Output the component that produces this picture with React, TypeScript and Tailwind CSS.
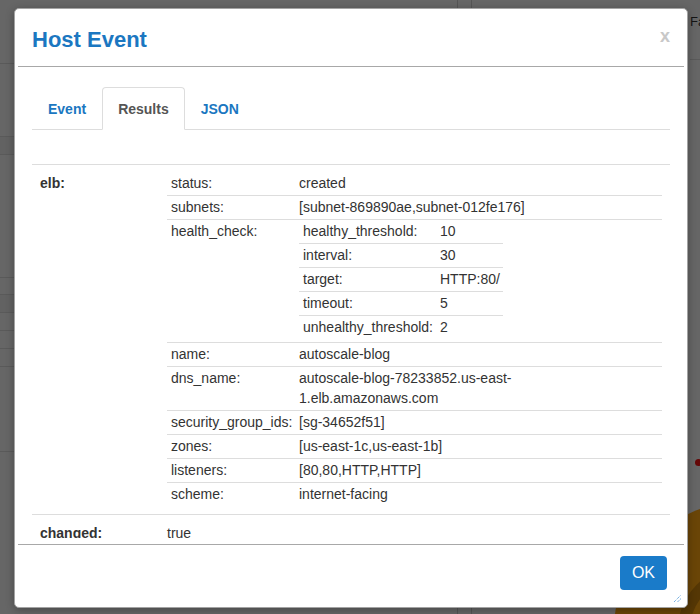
const nested: [string, string][] = [
  ['healthy_threshold:', '10'],
  ['interval:', '30'],
  ['target:', 'HTTP:80/'],
  ['timeout:', '5'],
  ['unhealthy_threshold:', '2'],
]

const elb: { key: string; value?: string[]; nested?: boolean }[] = [
  { key: 'status:', value: ['created'] },
  { key: 'subnets:', value: ['[subnet-869890ae,subnet-012fe176]'] },
  { key: 'health_check:', nested: true },
  { key: 'name:', value: ['autoscale-blog'] },
  { key: 'dns_name:', value: ['autoscale-blog-78233852.us-east-', '1.elb.amazonaws.com'] },
  { key: 'security_group_ids:', value: ['[sg-34652f51]'] },
  { key: 'zones:', value: ['[us-east-1c,us-east-1b]'] },
  { key: 'listeners:', value: ['[80,80,HTTP,HTTP]'] },
  { key: 'scheme:', value: ['internet-facing'] },
]

function Backdrop() {
  return (
    <div className="flex h-full">
      <div className="w-[14px] shrink-0">
        <div className="h-[64px] border-b border-[#5a5a5a]" />
        <div className="h-[73px] border-b border-[#5a5a5a]" />
        <div className="h-[18px] bg-[#626262] border-b border-[#5a5a5a]" />
        <div className="h-[123px] border-b border-[#5a5a5a]" />
        <div className="h-[17px] border-b border-[#5a5a5a]" />
        <div className="h-[18px] bg-[#626262] border-b border-[#5a5a5a]" />
        <div className="h-[18px] border-b border-[#5a5a5a]" />
        <div className="h-[18px] border-b border-[#5a5a5a]" />
        <div className="h-[18px] border-b border-[#5a5a5a]" />
        <div className="h-[85px] border-b border-[#5a5a5a]" />
      </div>
      <div className="flex-1">
        <div className="ml-[443px] h-full w-[15px] border-x border-[#555]" />
      </div>
      <div className="w-[12px] shrink-0 pl-[2px]">
        <div className="h-[60px] border-b border-[#5a5a5a] pt-[14px] text-[13px] leading-4 text-[#151515] whitespace-nowrap">
          Fa
        </div>
        <div className="ml-[5px] mt-[399px] h-[7px] w-[7px] rounded-full bg-[#650707]" />
      </div>
    </div>
  )
}

function Blob() {
  return (
    <svg className="absolute right-0 bottom-0" width="100" height="110" viewBox="600 504 100 110">
      <circle cx="742" cy="630" r="128" fill="#6a4507" />
      <circle cx="742" cy="630" r="58" fill="none" stroke="#553705" strokeWidth="12" />
    </svg>
  )
}

function ElbTable() {
  return (
    <table className="w-full border-collapse">
      <tbody>
        {elb.map((row, i) => (
          <tr key={row.key} className={i ? 'border-t border-[#ddd]' : ''}>
            <td className="w-[128px] whitespace-nowrap pl-1 pt-px pb-[2px] align-top leading-5">{row.key}</td>
            {row.nested ? (
              <td className="pl-1 pb-[3px] align-top">
                <table className="border-collapse">
                  <tbody>
                    {nested.map(([k, v], j) => (
                      <tr key={k} className={j ? 'border-t border-[#ddd]' : ''}>
                        <td className="whitespace-nowrap pl-1 pr-[3px] pt-px pb-[2px] leading-5">{k}</td>
                        <td className="whitespace-nowrap pl-1 pr-[3px] pt-px pb-[2px] leading-5">{v}</td>
                      </tr>
                    ))}
                  </tbody>
                </table>
              </td>
            ) : (
              <td className="pl-1 pt-px pb-[2px] align-top leading-5">
                {row.value!.map((line) => (
                  <div key={line}>{line}</div>
                ))}
              </td>
            )}
          </tr>
        ))}
      </tbody>
    </table>
  )
}

function Modal() {
  return (
    <div className="absolute left-[14px] top-[8px] flex h-[600px] w-[674px] flex-col rounded-[5px] border border-[#a3a3a3] bg-white shadow-[0_2px_8px_rgba(0,0,0,0.3)]">
      <div className="mx-[3px] flex h-[58px] shrink-0 items-center justify-between border-b border-[#a8a8a8] pl-[14px] pr-[14px]">
        <h1 className="mt-[3px] text-[22px] font-bold text-[#1b77c1]">Host Event</h1>
        <span className="-mt-[4px] text-[18px] font-bold leading-none text-[#c8c8c8]">x</span>
      </div>

      <div className="flex min-h-0 flex-1 flex-col pb-[6px]">
        <div className="min-h-0 flex-1 overflow-hidden px-[17px] pt-5">
          <ul className="flex border-b border-[#ddd] text-[14px] font-bold">
            <li className="border border-transparent px-[15px] pt-[11px] pb-[9px] leading-5 text-[#1b77c1]">Event</li>
            <li className="-mb-px rounded-t-[4px] border border-[#ddd] border-b-white bg-white px-[15px] pt-[11px] pb-[9px] leading-5 text-[#555]">
              Results
            </li>
            <li className="border border-transparent px-[15px] pt-[11px] pb-[9px] leading-5 text-[#1b77c1]">JSON</li>
          </ul>

          <table className="mt-[34px] w-full border-collapse">
            <tbody>
              <tr className="border-y border-[#ddd]">
                <td className="w-[127px] px-2 pt-[7px] pb-2 align-top font-bold leading-5">
                  <div className="pt-px">elb:</div>
                </td>
                <td className="px-2 pt-[7px] pb-2 align-top">
                  <ElbTable />
                </td>
              </tr>
              <tr>
                <td className="px-2 pt-[8px] pb-2 align-top font-bold leading-5">changed:</td>
                <td className="px-2 pt-[8px] pb-2 align-top leading-5">true</td>
              </tr>
            </tbody>
          </table>
        </div>
      </div>

      <div className="relative mx-[3px] flex h-[63px] shrink-0 items-start justify-end border-t border-[#a8a8a8] pt-[11px] pr-[17px]">
        <button className="h-[34px] rounded-[4px] bg-[#1a7bc9] px-3 text-[16px] text-white">OK</button>
        <svg className="absolute right-[2px] bottom-[4px]" width="9" height="9" viewBox="0 0 9 9">
          <path d="M1 8 L8 1 M4.5 8 L8 4.5" stroke="#3f8fd6" strokeWidth="1" strokeDasharray="1 1" />
        </svg>
      </div>
    </div>
  )
}

export default function App() {
  return (
    <div className="relative h-[614px] w-[700px] overflow-hidden bg-[#666] font-['Liberation_Sans',Arial,sans-serif] text-[14px] text-[#333]">
      <Blob />
      <Backdrop />
      <Modal />
    </div>
  )
}
